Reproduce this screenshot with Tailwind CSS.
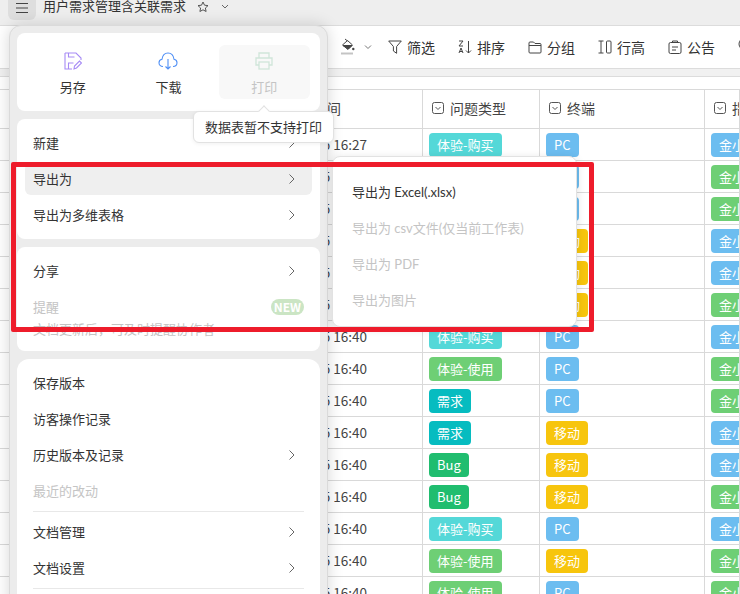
<!DOCTYPE html>
<html lang="zh-CN">
<head>
  <meta charset="UTF-8" />
  <script src="https://cdn.jsdelivr.net/npm/@tailwindcss/browser@4"></script>
  <title>用户需求管理含关联需求</title>
</head>
<body class="relative h-[594px] w-[740px] overflow-hidden bg-white font-['Noto_Sans_CJK_SC','Noto_Sans',sans-serif] text-[13px] text-[#333]">
  <!-- title bar -->
  <header class="flex h-[26px] items-start border-b border-[#dcdcdc] bg-[#eeeeee]">
    <div class="ml-2 flex h-5 w-7 items-center justify-center rounded-b-md bg-[#dedede] pb-1">
      <svg class="h-3 w-3" viewBox="0 0 12 12" fill="none" stroke="#444" stroke-width="1"><path d="M0 1.500h12M0 6h12M0 10.500h12" /></svg>
    </div>
    <span class="ml-[7px] -mt-[3px] text-[13px] leading-[18px]">用户需求管理含关联需求</span>
    <svg class="ml-[11px] mt-px h-3 w-3 shrink-0" viewBox="0 0 12 12" fill="none" stroke="#555"><path d="M6 1l1.500 3.200 3.500.4-2.600 2.400.7 3.500L6 8.800l-3.100 1.700.7-3.500L1 4.600l3.500-.4z" /></svg>
    <svg class="ml-[12px] mt-[3px] h-2 w-2 shrink-0" viewBox="0 0 8 8" fill="none" stroke="#666"><path d="M1 2l3 3 3-3" /></svg>
  </header>

  <!-- toolbar -->
  <div class="flex h-[43px] items-center border-b border-[#dcdcdc] bg-white pl-[341px] text-sm whitespace-nowrap">
    <svg class="h-[18px] w-[14px] shrink-0" viewBox="0 0 14 18" fill="none" stroke="#444"><path d="M6.500 2.500l5 4.500-4.500 4.500L1.500 7z" /><path d="M2 7.500h9L7 11z" fill="#444" /><path d="M4 1l2.500 2" /><circle cx="12.300" cy="11" r="1.200" fill="#444" stroke="none" /><path d="M0 15.500h12" stroke="#c4c4c4" stroke-width="2" /></svg>
    <svg class="ml-[9px] mr-4 h-2 w-2 shrink-0" viewBox="0 0 8 8" fill="none" stroke="#777"><path d="M1 2.500l3 3 3-3" /></svg>
    <div class="flex shrink-0 gap-[23px]">
      <div class="flex items-center gap-[5px]">
        <svg class="h-[14px] w-[14px] shrink-0" viewBox="0 0 14 14" fill="none" stroke="#444"><path d="M.7 1h12.600L8.600 6.500v6.800L5.400 11V6.500z" /></svg>
        筛选
      </div>
      <div class="flex items-center gap-[5px]">
        <svg class="h-[14px] w-[14px] shrink-0" viewBox="0 0 14 14" fill="none" stroke="#444"><path d="M1 1h4L1 6h4M1 13l2-5 2 5M1.700 11.500h2.600M10.500 1v12M8 10.500l2.500 2.500 2.500-2.500" /></svg>
        排序
      </div>
      <div class="flex items-center gap-[5px]">
        <svg class="h-[14px] w-[14px] shrink-0" viewBox="0 0 14 14" fill="none" stroke="#444"><path d="M1 3a1 1 0 0 1 1-1h3.500l1.500 1.500h5a1 1 0 0 1 1 1V12a1 1 0 0 1-1 1H2a1 1 0 0 1-1-1zM1 5.500h12" /></svg>
        分组
      </div>
      <div class="flex items-center gap-[5px]">
        <svg class="h-[14px] w-[14px] shrink-0" viewBox="0 0 14 14" fill="none" stroke="#444"><path d="M.5 1h5M.5 13h5M3 1v12" /><rect x="8.500" y="1" width="4.500" height="12" rx="1" /></svg>
        行高
      </div>
      <div class="flex items-center gap-[5px]">
        <svg class="h-[14px] w-[14px] shrink-0" viewBox="0 0 14 14" fill="none" stroke="#444"><rect x="1" y="2.500" width="12" height="11" rx="1.500" /><path d="M4.500 2.500V1h5v1.500M4 7h6M4 10h4" /></svg>
        公告
      </div>
      <svg class="h-[14px] w-[14px] shrink-0" viewBox="0 0 14 14" fill="none" stroke="#444"><circle cx="7" cy="7" r="6" /></svg>
    </div>
  </div>

  <div class="h-2 border-b border-[#dcdcdc] bg-[#f1f1f1]"></div>
  <div class="h-[13px] border-b border-[#d9d9d9] bg-white"></div>

  <!-- sheet -->
  <div id="sheet"></div>

  <!-- file menu -->
  <aside class="absolute top-[25px] left-[9px] flex h-[600px] w-[319px] flex-col gap-2 rounded-xl border border-[#dadada] bg-[#ececec] px-[7px] py-[7px] shadow-[0_0_16px_rgba(0,0,0,0.16)]">
    <section class="grid h-[78px] shrink-0 grid-cols-3 rounded-lg bg-white px-2 py-3">
      <div class="flex flex-col items-center">
        <svg class="mt-[7px] h-[18px] w-[18px]" viewBox="0 0 18 18" fill="none" stroke="#a78bf5" stroke-width="1.100"><path d="M1 1h11l5 5v2M1 1v16h7M4.500 17v-6h5M4.500 1v4h6" /><path d="M10 17l.5-3 5-5 2 2-5 5z" /></svg>
        <span class="mt-2 leading-[18px]">另存</span>
      </div>
      <div class="flex flex-col items-center">
        <svg class="mt-[7px] h-[18px] w-5" viewBox="0 0 20 18" fill="none" stroke="#4f8ff5" stroke-width="1.100"><path d="M5 14.500C2.500 14.500 1 12.800 1 10.800c0-2 1.300-3.300 3-3.500C4.500 3.500 7 1 10 1s5.500 2.500 6 6.300c1.700.2 3 1.500 3 3.500 0 2-1.500 3.700-4 3.700" /><path d="M10 7v10M7.500 14.500l2.500 2.500 2.500-2.500" /></svg>
        <span class="mt-2 leading-[18px]">下载</span>
      </div>
      <div class="mx-auto flex w-[91px] flex-col items-center rounded-md bg-[#f8f8f8] text-[#c4c4c4]">
        <svg class="mt-[7px] h-[18px] w-[18px]" viewBox="0 0 18 18" fill="none" stroke="#cfe5d9" stroke-width="1.300"><path d="M4 6V1h10v5M4 13H1V6h16v7h-3" /><rect x="4" y="10" width="10" height="7" /></svg>
        <span class="mt-2 leading-[18px]">打印</span>
      </div>
    </section>

    <section class="flex shrink-0 flex-col gap-1 rounded-lg bg-white px-2 py-2">
      <div class="flex h-8 items-center justify-between rounded-md px-2">新建<svg class="mr-[9px] h-[10px] w-[6px]" viewBox="0 0 6 10" fill="none" stroke="#666"><path d="M.5.500L5 5 .5 9.500" /></svg></div>
      <div class="flex h-8 items-center justify-between rounded-md bg-[#efefef] px-2">导出为<svg class="mr-[9px] h-[10px] w-[6px]" viewBox="0 0 6 10" fill="none" stroke="#666"><path d="M.5.500L5 5 .5 9.500" /></svg></div>
      <div class="flex h-8 items-center justify-between rounded-md px-2">导出为多维表格<svg class="mr-[9px] h-[10px] w-[6px]" viewBox="0 0 6 10" fill="none" stroke="#666"><path d="M.5.500L5 5 .5 9.500" /></svg></div>
    </section>

    <section class="flex shrink-0 flex-col gap-1 rounded-lg bg-white px-2 py-2">
      <div class="flex h-8 items-center justify-between rounded-md px-2">分享<svg class="mr-[9px] h-[10px] w-[6px]" viewBox="0 0 6 10" fill="none" stroke="#666"><path d="M.5.500L5 5 .5 9.500" /></svg></div>
      <div class="h-[52px] px-2 pt-2 text-[#c4c4c4]">
        <div class="flex h-4 items-center justify-between">提醒<span class="rounded-full bg-[#cbe5c4] px-[3px] text-[12px] leading-4 font-bold text-white">NEW</span></div>
        <div class="mt-[5px] leading-[18px]">文档更新后，可及时提醒协作者</div>
      </div>
    </section>

    <section class="flex flex-1 flex-col gap-1 rounded-xl bg-white px-2 py-2">
      <div class="flex h-8 shrink-0 items-center px-2">保存版本</div>
      <div class="flex h-8 shrink-0 items-center px-2">访客操作记录</div>
      <div class="flex h-8 shrink-0 items-center justify-between px-2">历史版本及记录<svg class="mr-[9px] h-[10px] w-[6px]" viewBox="0 0 6 10" fill="none" stroke="#666"><path d="M.5.500L5 5 .5 9.500" /></svg></div>
      <div class="flex h-8 shrink-0 items-center px-2 text-[#c4c4c4]">最近的改动</div>
      <div class="mx-2 h-px shrink-0 bg-[#e8e8e8]"></div>
      <div class="flex h-8 shrink-0 items-center justify-between px-2">文档管理<svg class="mr-[9px] h-[10px] w-[6px]" viewBox="0 0 6 10" fill="none" stroke="#666"><path d="M.5.500L5 5 .5 9.500" /></svg></div>
      <div class="flex h-8 shrink-0 items-center justify-between px-2">文档设置<svg class="mr-[9px] h-[10px] w-[6px]" viewBox="0 0 6 10" fill="none" stroke="#666"><path d="M.5.500L5 5 .5 9.500" /></svg></div>
      <div class="mx-2 h-px shrink-0 bg-[#e8e8e8]"></div>
    </section>
  </aside>

  <!-- print tooltip -->
  <div class="absolute top-[111px] left-[193px] flex h-8 w-[141px] items-center justify-center rounded-md border border-[#e2e2e2] bg-white shadow-[0_1px_4px_rgba(0,0,0,0.06)]">
    <span class="absolute -top-[5px] left-[66px] h-2 w-2 rotate-45 border-t border-l border-[#e2e2e2] bg-white"></span>
    数据表暂不支持打印
  </div>

  <!-- export submenu -->
  <div class="absolute top-[156px] left-[332px] flex h-[171px] w-[245px] flex-col rounded-lg border border-[#e2e2e2] bg-white pt-[18px] pl-[19px] font-['Lato','Noto_Sans_CJK_SC',sans-serif] shadow-[0_2px_10px_rgba(0,0,0,0.12)]">
    <div class="flex h-9 shrink-0 items-center">导出为 Excel(.xlsx)</div>
    <div class="flex h-9 shrink-0 items-center text-[#c4c4c4]">导出为 csv文件(仅当前工作表)</div>
    <div class="flex h-9 shrink-0 items-center text-[#c4c4c4]">导出为 PDF</div>
    <div class="flex h-9 shrink-0 items-center text-[#c4c4c4]">导出为图片</div>
  </div>

  <!-- annotation box -->
  <div class="absolute top-[162px] left-[11px] h-[170px] w-[583px] rounded-[2px] border-[5px] border-[#ee1c2b]"></div>

  <script>
    const tagColors = {
      "体验-购买": "bg-[#54d8d8]",
      "体验-使用": "bg-[#6ecf75]",
      "需求": "bg-[#06bcc0]",
      "Bug": "bg-[#20bd6f]",
      "PC": "bg-[#6cbdf0]",
      "移动": "bg-[#f7c50d]",
    };
    const cellClass = "flex h-8 items-start overflow-hidden border-r border-b border-[#d9d9d9] pt-[4px] pl-[6px] whitespace-nowrap";
    const tagClass = "flex h-6 shrink-0 items-center rounded-[4px] px-2 text-[13px] text-white";
    const headClass = "flex h-[39px] items-center gap-[6px] overflow-hidden border-r border-b border-[#d9d9d9] pb-[2px] pl-[9px] text-sm whitespace-nowrap text-[#444]";
    const caret = '<svg class="h-3 w-3 shrink-0" viewBox="0 0 12 12" fill="none" stroke="#555"><rect x=".5" y=".5" width="11" height="11" rx="2"/><path d="M3.500 5l2.500 2.500L8.500 5"/></svg>';

    const rows = [
      ["16:27", "体验-购买", "PC", "blue"],
      ["16:40", "体验-使用", "PC", "green"],
      ["16:40", "体验-使用", "PC", "green"],
      ["16:40", "需求", "移动", "blue"],
      ["16:40", "需求", "移动", "blue"],
      ["16:40", "Bug", "移动", "green"],
      ["16:40", "体验-购买", "PC", "blue"],
      ["16:40", "体验-使用", "PC", "green"],
      ["16:40", "需求", "PC", "green"],
      ["16:40", "需求", "移动", "blue"],
      ["16:40", "Bug", "移动", "blue"],
      ["16:40", "Bug", "移动", "green"],
      ["16:40", "体验-购买", "PC", "blue"],
      ["16:40", "体验-使用", "移动", "green"],
      ["16:40", "体验-使用", "PC", "green"],
    ];

    let html = '<div class="grid grid-cols-[423px_117px_165px_1fr]">';
    html += `<div class="${headClass} justify-end pr-[81px]">时间</div>`;
    html += `<div class="${headClass}">${caret}问题类型</div>`;
    html += `<div class="${headClass}">${caret}终端</div>`;
    html += `<div class="${headClass}">${caret}指标</div>`;
    for (const [time, type, device, owner] of rows) {
      const ownerColor = owner === "blue" ? "bg-[#6cbdf0]" : "bg-[#6ecf75]";
      html += `<div class="flex h-8 items-center justify-end border-r border-b border-[#d9d9d9] pr-[55px] text-[13.5px] text-[#444]">2023/3/5 ${time}</div>`;
      html += `<div class="${cellClass}"><span class="${tagClass} ${tagColors[type]}">${type}</span></div>`;
      html += `<div class="${cellClass}"><span class="${tagClass} ${tagColors[device]}">${device}</span></div>`;
      html += `<div class="${cellClass} pl-[5px]"><span class="${tagClass} ${ownerColor}">金小程序</span></div>`;
    }
    html += "</div>";
    document.querySelector("#sheet").innerHTML = html;
  </script>
</body>
</html>
